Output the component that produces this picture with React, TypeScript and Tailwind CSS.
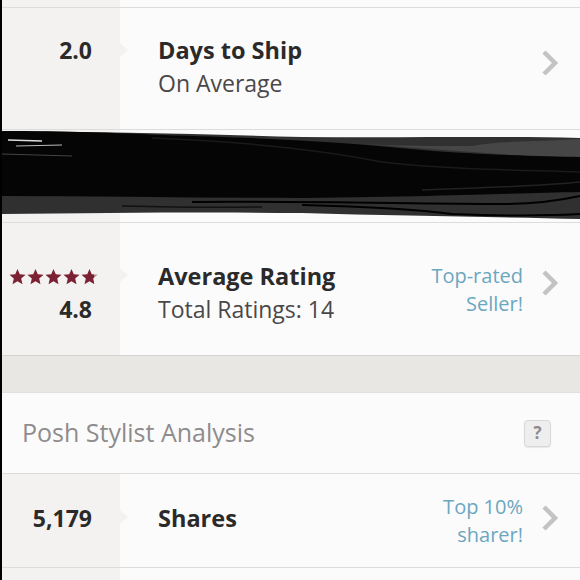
import React from "react"

const font = "font-['Open_Sans','Noto_Sans',sans-serif]"

function Chevron({ lift }: { lift: string }) {
  return (
    <svg width="18" height="26" viewBox="0 0 18 26" className={`shrink-0 ${lift}`}>
      <polyline points="3,2 14,13 3,24" fill="none" stroke="#c3c3c3" strokeWidth="4.5" />
    </svg>
  )
}

function Notch({ top }: { top: number }) {
  return (
    <div
      className="absolute left-[118px] w-0 h-0 border-y-[7px] border-y-transparent border-l-[8px] border-l-[#f4f2f0]"
      style={{ top }}
    />
  )
}

function Stars({ value }: { value: number }) {
  return (
    <div className="flex gap-[1px]">
      {[0, 1, 2, 3, 4].map((i) => {
        const fill = Math.max(0, Math.min(1, value - i))
        return (
          <svg key={i} width="17" height="16" viewBox="0 0 24 23">
            <defs>
              <linearGradient id={`st${i}`}>
                <stop offset={`${fill * 100}%`} stopColor="#7c2034" />
                <stop offset={`${fill * 100}%`} stopColor="#a88d93" />
              </linearGradient>
            </defs>
            <path d="M12 0l3.3 7.6 8.3.7-6.3 5.5 1.9 8.2L12 17.6 4.8 22l1.9-8.2L.4 8.3l8.3-.7z" fill={`url(#st${i})`} />
          </svg>
        )
      })}
    </div>
  )
}

export default function App() {
  return (
    <div className={`w-[580px] h-[580px] overflow-hidden bg-[#fcfbfc] border-l-2 border-black ${font} text-[#2b2a2a]`}>
      {/* tail of previous row */}
      <div className="flex h-[7px]">
        <div className="w-[118px] bg-[#f4f2f0]" />
      </div>

      {/* Days to ship */}
      <div className="relative flex h-[122px] border-t border-[#dedcda]">
        <div className="w-[118px] shrink-0 bg-[#f4f2f0] flex items-center justify-end pr-[28px] pb-[4px]">
          <div className="flex flex-col items-end leading-[33px]">
            <span className="text-[23px] font-bold">2.0</span>
            <span className="text-[23px] invisible">0</span>
          </div>
        </div>
        <Notch top={35} />
        <div className="flex-1 flex items-center pl-[38px] pr-[21px]">
          <div className="flex-1 flex flex-col leading-[33px] pb-[3px]">
            <span className="text-[23.5px] font-bold">Days to Ship</span>
            <span className="text-[23px] text-[#4a4848]">On Average</span>
          </div>
          <Chevron lift="mb-[12px]" />
        </div>
      </div>

      {/* redacted row */}
      <div className="relative flex h-[93px] border-t border-[#dedcda]">
        <div className="w-[118px] shrink-0 bg-[#f4f2f0]" />
        <svg className="absolute left-0 top-0" width="578" height="92" viewBox="0 0 578 92" preserveAspectRatio="none">
          <path d="M0 1 C100 2 200 4 300 7 C400 8 500 6 578 8 L578 89 C500 87 400 86 300 83 C200 82 100 83 0 84 Z" fill="#303030" />
          <path d="M578 9 C540 12 500 10 470 16 C430 16 400 16 360 14 L578 30 Z" fill="#464646" />
          <path d="M0 1 C60 1 120 3 160 5 C260 8 330 11 420 20 C480 25 540 26 578 27 L578 62 C520 63 460 66 300 68 C200 68 100 66 0 66 Z" fill="#050505" />
          <path d="M190 72 C300 71 420 74 500 74 C530 74 560 70 578 66" fill="none" stroke="#000" strokeWidth="2" />
          <path d="M300 75 C380 77 420 80 450 84 C500 86 540 86 578 84" fill="none" stroke="#000" strokeWidth="2" />
          <path d="M120 76 C160 77 200 78 260 77" fill="none" stroke="#111" strokeWidth="1.5" />
          <path d="M150 8 C250 12 330 22 380 32 C450 40 520 40 578 42" fill="none" stroke="#1a1a1a" strokeWidth="1.5" />
          <path d="M420 60 C480 58 540 56 578 52" fill="none" stroke="#222" strokeWidth="1.5" />
          <path d="M6 10 L40 11" stroke="#ddd" strokeWidth="1.5" />
          <path d="M14 16 L60 15" stroke="#bbb" strokeWidth="1" />
          <path d="M0 24 L70 26" stroke="#444" strokeWidth="1" />
        </svg>
      </div>

      {/* Average rating */}
      <div className="relative flex h-[133px] border-t border-[#dedcda]">
        <div className="w-[118px] shrink-0 bg-[#f4f2f0] flex items-center justify-end pr-[22px] pt-[8px]">
          <div className="flex flex-col items-end leading-[33px]">
            <div className="h-[33px] flex items-center">
              <Stars value={4.8} />
            </div>
            <span className="text-[23px] font-bold pr-[6px]">4.8</span>
          </div>
        </div>
        <Notch top={45} />
        <div className="flex-1 flex items-center pl-[38px] pr-[21px]">
          <div className="flex-1 flex flex-col leading-[33px] pt-[8px]">
            <span className="text-[23.5px] font-bold">Average Rating</span>
            <span className="text-[23px] text-[#4a4848]">Total Ratings: 14</span>
          </div>
          <div className="flex flex-col items-end text-[20px] leading-[28px] text-[#6ba7bf] mr-[18px] pt-[2px]">
            <span>Top-rated</span>
            <span>Seller!</span>
          </div>
          <Chevron lift="mb-[12px]" />
        </div>
      </div>

      {/* gray band */}
      <div className="h-[38px] bg-[#e9e7e4] border-t border-[#d6d4d1] border-b border-b-[#e2e0dd]" />

      {/* Posh stylist analysis */}
      <div className="flex items-center h-[80px] pl-[20px] pr-[29px]">
        <span className="flex-1 text-[25px] text-[#8e8c8c]">Posh Stylist Analysis</span>
        <div className="w-[27px] h-[27px] rounded-[4px] bg-[#efeeee] border border-[#d9d8d8] shadow-[0_1px_1px_rgba(0,0,0,0.08)] flex items-center justify-center text-[17px] font-bold text-[#8d8d8d]">
          ?
        </div>
      </div>

      {/* Shares */}
      <div className="relative flex h-[94px] border-t border-[#dedcda]">
        <div className="w-[118px] shrink-0 bg-[#f4f2f0] flex items-center justify-end pr-[28px] pb-[4px]">
          <span className="text-[23px] font-bold leading-[33px]">5,179</span>
        </div>
        <Notch top={36} />
        <div className="flex-1 flex items-center pl-[38px] pr-[21px]">
          <span className="flex-1 text-[23.5px] font-bold leading-[33px] pb-[4px]">Shares</span>
          <div className="flex flex-col items-end text-[20px] leading-[28px] text-[#6ba7bf] mr-[18px]">
            <span>Top 10%</span>
            <span>sharer!</span>
          </div>
          <Chevron lift="mb-[6px]" />
        </div>
      </div>

      {/* next row start */}
      <div className="flex h-[20px] border-t border-[#dedcda]">
        <div className="w-[118px] bg-[#f4f2f0]" />
      </div>
    </div>
  )
}
